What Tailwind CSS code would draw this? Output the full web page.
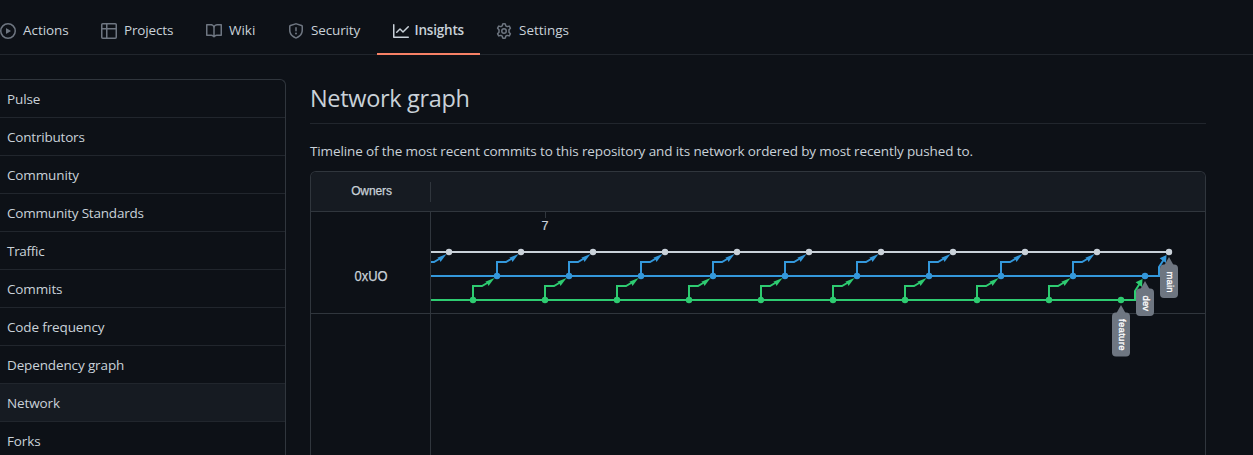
<!DOCTYPE html>
<html lang="en">
<head>
<meta charset="utf-8">
<title>Network graph</title>
<script src="https://cdn.jsdelivr.net/npm/@tailwindcss/browser@4"></script>
</head>
<body class="h-[455px] overflow-hidden bg-[#0d1117] font-['Open_Sans','Noto_Sans',sans-serif] text-[13.5px] leading-[21px] text-[#c9d1d9]">
<nav class="flex h-[55px] items-start border-b border-[#21262d]">
  <a class="flex h-[55px] w-[101px] items-center gap-[7px] pt-[6px]"><svg class="size-4 shrink-0 fill-[#6e7681]" viewBox="0 0 16 16"><path fill-rule="evenodd" d="M1.5 8a6.5 6.5 0 1113 0 6.500 6.500 0 01-13 0zM8 0a8 8 0 100 16A8 8 0 008 0zM6.379 5.227A.25.25 0 006 5.442v5.117a.25.25 0 00.379.214l4.264-2.559a.25.25 0 000-.428L6.379 5.227z"/></svg><span class="tracking-[-0.05px]">Actions</span></a>
  <a class="flex h-[55px] w-[105px] items-center gap-[7px] pt-[6px]"><svg class="size-4 shrink-0 fill-[#6e7681]" viewBox="0 0 16 16"><path fill-rule="evenodd" d="M0 1.750C0 .784.784 0 1.750 0h12.500C15.216 0 16 .784 16 1.750v12.500A1.750 1.750 0 0114.250 16H1.750A1.750 1.750 0 010 14.250V1.750zM1.500 6.500v7.750c0 .138.112.250.250.250H5v-8H1.500zM5 5H1.500V1.750a.250.250 0 01.250-.250H5V5zm1.500 1.500v8h7.750a.250.250 0 00.250-.250V6.500h-8zm8-1.500h-8V1.500h7.750a.250.250 0 01.250.250V5z"/></svg><span class="tracking-[-0.15px]">Projects</span></a>
  <a class="flex h-[55px] w-[82px] items-center gap-[7px] pt-[6px]"><svg class="size-4 shrink-0 fill-[#6e7681]" viewBox="0 0 16 16"><path fill-rule="evenodd" d="M0 1.750A.750.750 0 01.750 1h4.253c1.227 0 2.317.590 3 1.501A3.744 3.744 0 0111.006 1h4.245a.750.750 0 01.750.750v10.500a.750.750 0 01-.750.750h-4.507a2.250 2.250 0 00-1.591.659l-.622.621a.750.750 0 01-1.060 0l-.622-.621A2.250 2.250 0 005.258 13H.750a.750.750 0 01-.750-.750V1.750zm8.755 3a2.250 2.250 0 012.250-2.250H14.500v9h-3.757c-.710 0-1.400.201-1.992.572l.004-7.322zm-1.504 7.324l.004-5.073-.002-2.253A2.250 2.250 0 005.003 2.500H1.500v9h3.757a3.750 3.750 0 011.994.574z"/></svg><span>Wiki</span></a>
  <a class="flex h-[55px] w-[89px] items-center gap-[7px] pt-[6px]"><svg class="size-4 shrink-0 fill-[#6e7681]" viewBox="0 0 16 16"><path fill-rule="evenodd" d="M7.467.133a1.750 1.750 0 011.066 0l5.250 1.680A1.750 1.750 0 0115 3.480V7c0 1.566-.320 3.182-1.303 4.682-.983 1.498-2.585 2.813-5.032 3.855a1.700 1.700 0 01-1.330 0c-2.447-1.042-4.049-2.357-5.032-3.855C1.320 10.182 1 8.566 1 7V3.480a1.750 1.750 0 011.217-1.667l5.250-1.680zm.610 1.429a.250.250 0 00-.153 0l-5.250 1.680a.250.250 0 00-.174.238V7c0 1.358.275 2.666 1.057 3.860.784 1.194 2.121 2.340 4.366 3.297a.200.200 0 00.154 0c2.245-.956 3.582-2.104 4.366-3.298C13.225 9.666 13.500 8.360 13.500 7V3.480a.250.250 0 00-.174-.237l-5.250-1.680zM9 10.500a1 1 0 11-2 0 1 1 0 012 0zm-.250-5.750a.750.750 0 10-1.500 0v3a.750.750 0 001.500 0v-3z"/></svg><span class="tracking-[-0.15px]">Security</span></a>
  <a class="flex h-[55px] w-[103px] shrink-0 items-center gap-[5.5px] border-b-2 border-[#f78166] pl-4 pt-2 font-semibold"><svg class="size-4 shrink-0 fill-[#c9d1d9]" viewBox="0 0 16 16"><path fill-rule="evenodd" d="M1.500 1.750a.750.750 0 00-1.500 0v12.500c0 .414.336.750.750.750h14.500a.750.750 0 000-1.500H1.500V1.750zm14.280 2.530a.750.750 0 00-1.060-1.060L10 7.940 7.530 5.470a.750.750 0 00-1.060 0L3.220 8.720a.750.750 0 001.060 1.060L7 7.060l2.470 2.470a.750.750 0 001.060 0l5.250-5.250z"/></svg><span class="tracking-[-0.2px]">Insights</span></a>
  <a class="flex h-[55px] items-center gap-[7px] pl-4 pt-[6px]"><svg class="size-4 shrink-0 fill-none stroke-[#6e7681]" stroke-width="1.5" stroke-linejoin="round" viewBox="0 0 16 16"><circle cx="8" cy="8" r="2.250"/><path d="M6.700.95Q8 .6 9.300.95L9.750 2.850 11.150 3.650 13.100 3.100Q14 4.100 14.400 5.350L13 6.800V9.200L14.400 10.650Q14 11.900 13.100 12.900L11.150 12.350 9.750 13.150 9.300 15.050Q8 15.400 6.700 15.050L6.250 13.150 4.850 12.350 2.900 12.900Q2 11.900 1.600 10.650L3 9.200V6.800L1.600 5.350Q2 4.100 2.900 3.100L4.850 3.650 6.250 2.850Z"/></svg><span>Settings</span></a>
</nav>
<div class="flex h-[400px] gap-6 overflow-hidden pt-6">
  <aside class="h-[376px] w-[286px] shrink-0 overflow-hidden rounded-tr-md border-r border-t border-[#30363d] tracking-[-0.13px]">
    <div class="flex h-[38px] items-center border-b border-[#21262d] pl-[7px] pt-px">Pulse</div>
    <div class="flex h-[38px] items-center border-b border-[#21262d] pl-[7px] pt-px tracking-[-0.2px]">Contributors</div>
    <div class="flex h-[38px] items-center border-b border-[#21262d] pl-[7px] pt-px">Community</div>
    <div class="flex h-[38px] items-center border-b border-[#21262d] pl-[7px] pt-px tracking-[-0.2px]">Community Standards</div>
    <div class="flex h-[38px] items-center border-b border-[#21262d] pl-[7px] pt-px tracking-[-0.3px]">Traffic</div>
    <div class="flex h-[38px] items-center border-b border-[#21262d] pl-[7px] pt-px">Commits</div>
    <div class="flex h-[38px] items-center border-b border-[#21262d] pl-[7px] pt-px">Code frequency</div>
    <div class="flex h-[38px] items-center border-b border-[#21262d] pl-[7px] pt-px">Dependency graph</div>
    <div class="flex h-[38px] items-center border-b border-[#21262d] bg-[#161b22] pl-[7px] pt-px">Network</div>
    <div class="flex h-[33px] items-start pl-[7px] pt-[9px]">Forks</div>
  </aside>
  <main class="w-[896px] shrink-0">
    <h2 class="h-[45px] border-b border-[#21262d] text-[23.5px] leading-[38px] tracking-[-0.33px]">Network graph</h2>
    <p class="mt-[17px] whitespace-nowrap tracking-[-0.12px]">Timeline of the most recent commits to this repository and its network ordered by most recently pushed to.</p>
    <section class="mt-[9px] h-[284px] overflow-hidden rounded-t-md border border-b-0 border-[#30363d] font-['Liberation_Sans',sans-serif]">
      <header class="flex h-10 items-center border-b border-[#30363d] bg-[#161b22]">
        <div class="w-[119px] pl-[2px] text-center text-[12px] tracking-[-0.1px] [-webkit-text-stroke:0.25px_#c9d1d9]">Owners</div>
        <div class="h-5 w-px bg-[#30363d]"></div>
      </header>
      <svg class="block h-[243px] w-[894px]" viewBox="311 212 894 243">
        <defs>
          <g id="step"><path d="M0 0V-14H9L15 -17.500" fill="none" stroke="currentColor" stroke-width="2"/><path d="M21.500 -22L12.300 -18.300L14.300 -16.800L15.500 -14Z" fill="currentColor"/></g>
          <g id="dots" fill="currentColor"><circle r="3.200"/><circle cx="72" r="3.200"/><circle cx="144" r="3.200"/><circle cx="216" r="3.200"/><circle cx="288" r="3.200"/><circle cx="360" r="3.200"/><circle cx="432" r="3.200"/><circle cx="504" r="3.200"/><circle cx="576" r="3.200"/><circle cx="648" r="3.200"/></g>
          <g id="steps"><use href="#step"/><use href="#step" x="72"/><use href="#step" x="144"/><use href="#step" x="216"/><use href="#step" x="288"/><use href="#step" x="360"/><use href="#step" x="432"/><use href="#step" x="504"/><use href="#step" x="576"/></g>
          <clipPath id="area"><rect x="431" y="212" width="774" height="243"/></clipPath>
        </defs>
        <path d="M430.500 212V455M311 313.500H1205M545.500 212V218" stroke="#30363d"/>
        <text x="371" y="280.500" text-anchor="middle" font-size="14" fill="#c9d1d9" stroke="#c9d1d9" stroke-width=".25" textLength="33" lengthAdjust="spacingAndGlyphs">0xUO</text>
        <text x="545" y="230" text-anchor="middle" font-size="12.500" fill="#c9d1d9" stroke="#c9d1d9" stroke-width=".2">7</text>
        <g clip-path="url(#area)" stroke-width="2">
          <g class="text-[#c9d1d9]"><path d="M431 252H1169" stroke="currentColor"/><g stroke="none"><use href="#dots" x="449" y="252"/><circle cx="1169" cy="252" r="3.200" fill="currentColor"/></g></g>
          <g class="text-[#3498db]"><path d="M431 276H1159V267L1163.500 260" fill="none" stroke="currentColor"/><path d="M1166.500 255L1159.600 258.300L1166 263Z" fill="currentColor"/><use href="#step" x="425" y="276"/><use href="#steps" x="497" y="276"/><use href="#dots" x="497" y="276"/></g>
          <g class="text-[#2ecc71]"><path d="M431 300H1135V291L1139.500 284" fill="none" stroke="currentColor"/><path d="M1142.500 279L1135.600 282.300L1142 287Z" fill="currentColor"/><use href="#steps" x="473" y="300"/><use href="#dots" x="473" y="300"/></g>
        </g>
        <g fill="#6e7681">
          <path d="M1121 305L1125.500 313H1116.500Z"/><rect x="1112" y="312.500" width="18" height="44" rx="4"/>
          <path d="M1145 281L1149.500 289H1140.500Z"/><rect x="1136" y="288.500" width="18" height="27.500" rx="4"/>
          <path d="M1169 257L1173.500 265H1164.500Z"/><rect x="1160" y="264.500" width="18" height="33.500" rx="4"/>
        </g>
        <g fill="#fff" font-size="9.500" stroke="#fff" stroke-width=".3">
          <text transform="translate(1118.500 319)rotate(90)" textLength="31.500">feature</text>
          <text transform="translate(1142.500 295.500)rotate(90)" textLength="15.500">dev</text>
          <text transform="translate(1166.500 271.500)rotate(90)" textLength="21">main</text>
        </g>
      </svg>
    </section>
  </main>
</div>
</body>
</html>
